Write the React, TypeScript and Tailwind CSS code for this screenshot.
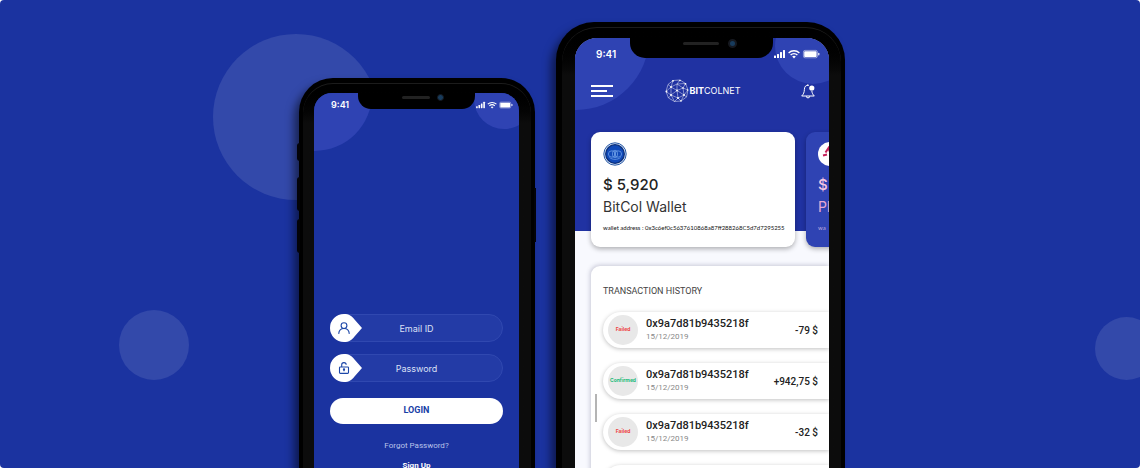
import { useId, type ReactNode } from 'react';

function StatusIcons({ className }: { className: string }) {
  return (
    <svg viewBox="0 0 46 10" className={className} fill="#fff" aria-hidden="true">
      <rect x="0" y="6.5" width="2" height="2.5" rx=".5" />
      <rect x="3" y="5" width="2" height="4" rx=".5" />
      <rect x="6" y="3" width="2" height="6" rx=".5" />
      <rect x="9" y="1" width="2" height="8" rx=".5" />
      <g fill="none" stroke="#fff" strokeWidth="1.4">
        <path d="M14.600 3.900a8 8 0 0 1 10.800 0" />
        <path d="M16.600 6.100a5 5 0 0 1 6.800 0" />
      </g>
      <path d="M18.200 7.600a2.600 2.600 0 0 1 3.600 0L20 9.400z" />
      <rect x="29.400" y="1.400" width="14" height="7.400" rx="1.600" fill="none" stroke="#fff" strokeOpacity=".6" strokeWidth=".8" />
      <rect x="30.200" y="2.200" width="12.400" height="5.800" rx=".8" />
      <rect x="44.200" y="3.800" width="1.200" height="2.600" rx=".6" />
    </svg>
  );
}

function GlobeLogo() {
  return (
    <svg viewBox="0 0 24 24" className="size-6" fill="none" stroke="#fff" strokeWidth=".6" aria-hidden="true">
      <path d="M8 1.500 15 1l5.500 3.500L23 11l-1.500 7-5.500 4-6.500.5L3.500 19 1 12.500 3 5.500z" opacity=".8" />
      <path d="M8 1.500 6 8l6-3 3-4M3 5.500 6 8l-5 4.500L6 16l-2.500 3M6 8v8l6-4.500L6 8M12 5l6 4-6 2.500V5M12 5l8.500-.5L18 9l5 2-4 5-1-7M12 11.500l7 4.500 2.500 2M12 11.500 13 19l6-3-3 6-3-3-3.500 3.500L6 16l7 3" opacity=".75" />
      <g fill="#fff" stroke="none">
        <circle cx="8" cy="1.800" r=".9" /><circle cx="15" cy="1.500" r=".8" /><circle cx="20.500" cy="4.800" r=".9" />
        <circle cx="6" cy="8" r=".9" /><circle cx="12" cy="11.500" r=".9" /><circle cx="18" cy="9" r=".8" />
        <circle cx="1.500" cy="12.500" r=".9" /><circle cx="6" cy="16" r=".9" /><circle cx="13" cy="19" r=".9" />
        <circle cx="19" cy="16" r=".9" /><circle cx="16" cy="22" r=".8" /><circle cx="22.500" cy="11" r=".8" />
      </g>
    </svg>
  );
}

function BellIcon() {
  return (
    <svg viewBox="0 0 14 15" className="h-[15px] w-[14px]" fill="none" stroke="#fff" strokeWidth="1" aria-hidden="true">
      <path d="M7.800 1.400c-3-.6-4.300 1.300-4.400 4-.1 3-.9 4.800-2.700 6.600h12.600c-1.500-1.500-2.300-3-2.500-5.200M6.800 1.200V.3M5.300 12.200a1.700 1.700 0 0 0 3.400 0" strokeLinejoin="round" />
      <circle cx="10.800" cy="4" r="2.600" fill="#fff" stroke="none" />
    </svg>
  );
}

function UserIcon() {
  return (
    <svg viewBox="0 0 12 12" className="size-3" fill="none" stroke="#1d47a8" strokeWidth="1.100" aria-hidden="true">
      <circle cx="6" cy="3.600" r="2.900" />
      <path d="M.7 11.900c.2-3.200 2.200-5.400 5.300-5.400s5.100 2.200 5.300 5.400" />
    </svg>
  );
}

function LockIcon() {
  return (
    <svg viewBox="0 0 12 12" className="size-3" fill="none" stroke="#1d47a8" strokeWidth="1.100" aria-hidden="true">
      <rect x="1.500" y="5" width="9" height="6.400" rx=".8" />
      <path d="M3.700 5V3a2.200 2.200 0 0 1 4.500-.2M6 7v2.300" />
      <circle cx="6" cy="7.500" r=".6" />
    </svg>
  );
}

function Field({ label, type, icon }: { label: string; type: string; icon: ReactNode }) {
  const id = useId();
  return (
    <div className="relative">
      <input
        id={id}
        type={type}
        aria-label={label}
        placeholder={label}
        className="block h-7 w-full rounded-full border border-[#3048b0] bg-[#233ba6] text-center text-[9px] text-white outline-none placeholder:text-[#dbe0f5]"
      />
      <label htmlFor={id} className="absolute top-0 left-0 flex h-7 w-8 items-center pl-2">
        <svg viewBox="0 0 32 28" className="absolute top-0 left-0 h-7 w-8" fill="#fff" aria-hidden="true">
          <path d="M14 0c5 0 8 2 10.500 5.500L32 14l-7.500 8.500C22 26 19 28 14 28a14 14 0 0 1 0-28z" />
        </svg>
        <span className="relative">{icon}</span>
      </label>
    </div>
  );
}

function LoginPhone() {
  return (
    <section className="relative mt-[78px] flex w-[236px] shrink-0 flex-col rounded-t-[34px] bg-black pt-[5px] pr-[4px] pl-[4px] shadow-[-5px_6px_8px_rgba(0,0,0,0.5)]">
      <span className="absolute top-[65px] -left-[2px] h-[18px] w-[3px] rounded-l bg-[#030308]" />
      <span className="absolute top-[99px] -left-[2px] h-[34px] w-[3px] rounded-l bg-[#030308]" />
      <span className="absolute top-[141px] -left-[2px] h-[34px] w-[3px] rounded-l bg-[#030308]" />
      <span className="absolute top-[110px] -right-px h-[54px] w-[2px] bg-[#030308]" />
      <div className="flex flex-1 flex-col rounded-t-[30px] border-t border-[#1c1c1c] bg-[#0c0c0c] bg-linear-to-b from-black to-[#0c0c0c] to-10% pt-[9px] pr-3 pl-[11px]">
        <div className="relative flex flex-1 flex-col overflow-hidden rounded-t-[18px] bg-[#1b33a0]">
          <span className="absolute -top-[57px] -left-[57px] size-[115px] rounded-full bg-[#2f43b3]" />
          <span className="absolute -top-[24px] -right-[15px] size-[60px] rounded-full bg-[#2f43b3]" />
          <div className="relative flex h-4 items-start justify-between pr-[6px] pl-[17px]">
            <span className="pt-[5px] text-[9px] leading-[14px] font-semibold text-white">9:41</span>
            <StatusIcons className="mt-[8px] h-2 w-[37px]" />
            <div className="absolute top-0 left-[44px] flex h-4 w-[117px] items-start justify-center gap-[7px] rounded-b-[13px] bg-black pl-[12px]">
              <span className="mt-[3px] h-[3px] w-7 rounded-full bg-[#222]" />
              <span className="mt-[1px] size-[7px] rounded-full border border-[#15181f] bg-[#173b5c]" />
            </div>
          </div>
          <form className="flex flex-col px-4 pt-[205px]" onSubmit={(e) => e.preventDefault()}>
            <div className="flex flex-col gap-3">
              <Field label="Email ID" type="email" icon={<UserIcon />} />
              <Field label="Password" type="password" icon={<LockIcon />} />
            </div>
            <button type="submit" className="mt-4 h-[26px] rounded-full bg-white font-['Roboto',sans-serif] text-[9px] font-bold text-[#1740a6]">
              LOGIN
            </button>
            <a href="#forgot" className="mt-4 text-center font-['Roboto',sans-serif] text-[8px] leading-3 text-[#bac3ea]">Forgot Password?</a>
            <a href="#signup" className="mt-2 text-center font-['Roboto',sans-serif] text-[8px] leading-3 font-bold text-white">Sign Up</a>
          </form>
        </div>
      </div>
    </section>
  );
}

function WalletCards() {
  return (
    <div className="flex gap-[11px]">
      <article className="flex h-[115px] w-[204px] shrink-0 flex-col rounded-[9px] bg-white pt-[10px] pl-3 shadow-[0_2px_5px_rgba(0,0,0,0.3)]">
        <svg viewBox="0 0 24 24" className="size-6" aria-hidden="true">
          <circle cx="12" cy="12" r="11.200" fill="#d8e4f5" stroke="#2a5aa5" strokeWidth="1" />
          <circle cx="12" cy="12" r="9.300" fill="#1049b8" stroke="#0b2f7a" strokeWidth="1.300" />
          <g fill="none" stroke="#78a9ee" strokeWidth=".7">
            <ellipse cx="9" cy="12" rx="3.600" ry="3.200" />
            <ellipse cx="15" cy="12" rx="3.600" ry="3.200" />
            <ellipse cx="12" cy="12" rx="2.600" ry="3.800" />
            <path d="M12 9.800v4.400M6.500 15.500c3 2.500 8 2.500 11 0" />
          </g>
        </svg>
        <strong className="mt-[9px] text-[15px] leading-5 font-medium text-[#222]">$ 5,920</strong>
        <span className="mt-[2px] text-[14px] leading-5 text-[#333]">BitCol Wallet</span>
        <span className="mt-[7px] font-['Lato',sans-serif] text-[6px] leading-2 whitespace-nowrap text-[#111]">wallet address : 0x3c6ef0c5637610868a87ff288268C5d7d7295255</span>
      </article>
      <article className="flex h-[115px] w-[204px] shrink-0 flex-col rounded-[9px] bg-[#2f43b3] pt-[10px] pl-3 shadow-[0_2px_5px_rgba(0,0,0,0.3)]">
        <svg viewBox="0 0 24 24" className="size-6" aria-hidden="true">
          <circle cx="12" cy="12" r="12" fill="#fff" />
          <path d="m5 13.500 4-1M7.500 10.500l3-4.500 4 11" fill="none" stroke="#c51e58" strokeWidth="2" />
        </svg>
        <strong className="mt-[9px] text-[15px] leading-5 font-medium text-[#f5c5e2]">$</strong>
        <span className="mt-[2px] text-[14px] leading-5 text-[#e7a9d3]">Pl</span>
        <span className="mt-[7px] font-['Lato',sans-serif] text-[6px] leading-2 text-[#b9a5dc]">wa</span>
      </article>
    </div>
  );
}

const transactions = [
  { status: 'Failed', amount: '-79 $' },
  { status: 'Confirmed', amount: '+942,75 $' },
  { status: 'Failed', amount: '-32 $' },
  { status: '', amount: '' },
];

function WalletPhone() {
  return (
    <section className="relative mt-[22px] flex w-[289px] shrink-0 flex-col rounded-t-[38px] bg-black pt-[5px] pr-[4px] pl-[6px] shadow-[-5px_6px_8px_rgba(0,0,0,0.5)]">
      <div className="flex flex-1 flex-col rounded-t-[35px] border-t border-[#1c1c1c] bg-[#0c0c0c] bg-linear-to-b from-black to-[#0c0c0c] to-10% pt-[10px] pr-[12px] pl-[13px]">
        <div className="relative flex flex-1 flex-col overflow-hidden rounded-t-[22px] bg-[#f8f9fe]">
          <div className="relative h-[193px] shrink-0 overflow-hidden bg-[#2032a2]">
            <span className="absolute -top-[74px] -left-[72px] size-[146px] rounded-full bg-[#2f43b3]" />
            <span className="absolute -top-[30px] -right-[22px] size-[76px] rounded-full bg-[#2f43b3]" />
            <div className="relative flex h-5 items-start justify-between pr-[9px] pl-[21px]">
              <span className="pt-[8px] text-[10px] leading-[16px] font-semibold text-white">9:41</span>
              <StatusIcons className="mt-[11px] h-[10px] w-[46px]" />
              <div className="absolute top-0 left-[55px] flex h-5 w-[143px] items-start justify-center gap-[9px] rounded-b-[15px] bg-black pl-4">
                <span className="mt-1 h-[3px] w-9 rounded-full bg-[#222]" />
                <span className="mt-[1px] size-[9px] rounded-full border-2 border-[#15181f] bg-[#173b5c]" />
              </div>
            </div>
            <header className="relative mt-[21px] grid h-6 grid-cols-[1fr_auto_1fr] items-center pr-[14px] pl-4">
              <button type="button" aria-label="Menu" className="flex w-[22px] flex-col gap-[3px]">
                <span className="h-[2px] w-full bg-white" />
                <span className="h-[2px] w-4 bg-white" />
                <span className="h-[2px] w-full bg-white" />
              </button>
              <div className="flex items-center text-[9px] text-white">
                <GlobeLogo />
                <span><b>BIT</b>COLNET</span>
              </div>
              <button type="button" aria-label="Notifications" className="justify-self-end"><BellIcon /></button>
            </header>
          </div>
          <div className="relative -mt-[99px] pl-4">
            <WalletCards />
          </div>
          <div className="relative mt-[19px] ml-4 flex-1 rounded-tl-[9px] bg-white pt-[17px] pl-3 shadow-[-1px_-1px_4px_rgba(60,60,100,0.25)]">
            <span className="absolute top-[128px] left-[4px] h-7 w-[2px] bg-[#b4b4b4]" />
            <h2 className="font-['Roboto',sans-serif] text-[9px] leading-4 text-[#444]">TRANSACTION HISTORY</h2>
            <ul className="mt-[13px] flex flex-col gap-[15px] font-['Roboto',sans-serif]">
              {transactions.map((t, i) => (
                <li key={i} className="flex h-9 items-center rounded-l-full bg-white pr-[11px] pl-[5px] shadow-[0_1px_4px_rgba(0,0,0,0.25)]">
                  <span className={`flex size-[30px] shrink-0 items-center justify-center rounded-full bg-[#e8e8e8] font-['Inter',sans-serif] text-[5px] font-bold ${t.status === 'Failed' ? 'text-[#ee4444]' : 'text-[#22bb7a]'}`}>
                    {t.status}
                  </span>
                  {t.status && (
                    <>
                      <span className="ml-2 flex flex-1 flex-col">
                        <span className="text-[11px] leading-[14px] font-medium text-[#222]">0x9a7d81b9435218f</span>
                        <span className="text-[8px] leading-3 text-[#888]">15/12/2019</span>
                      </span>
                      <span className="text-[10px] font-medium text-[#222]">{t.amount}</span>
                    </>
                  )}
                </li>
              ))}
            </ul>
          </div>
        </div>
      </div>
    </section>
  );
}

export default function App() {
  return (
    <main className="relative flex h-screen justify-center gap-[21px] overflow-hidden rounded-[4px] bg-[#1b33a0] pl-1 font-['Inter',sans-serif]">
      <span className="absolute top-[34px] left-[calc(50%-357px)] size-[166px] rounded-full bg-[#3349aa]" />
      <span className="absolute top-[310px] left-[calc(50%-451px)] size-[70px] rounded-full bg-[#3349aa]" />
      <span className="absolute top-[317px] -right-[18px] size-[63px] rounded-full bg-[#3349aa]" />
      <LoginPhone />
      <WalletPhone />
    </main>
  );
}
